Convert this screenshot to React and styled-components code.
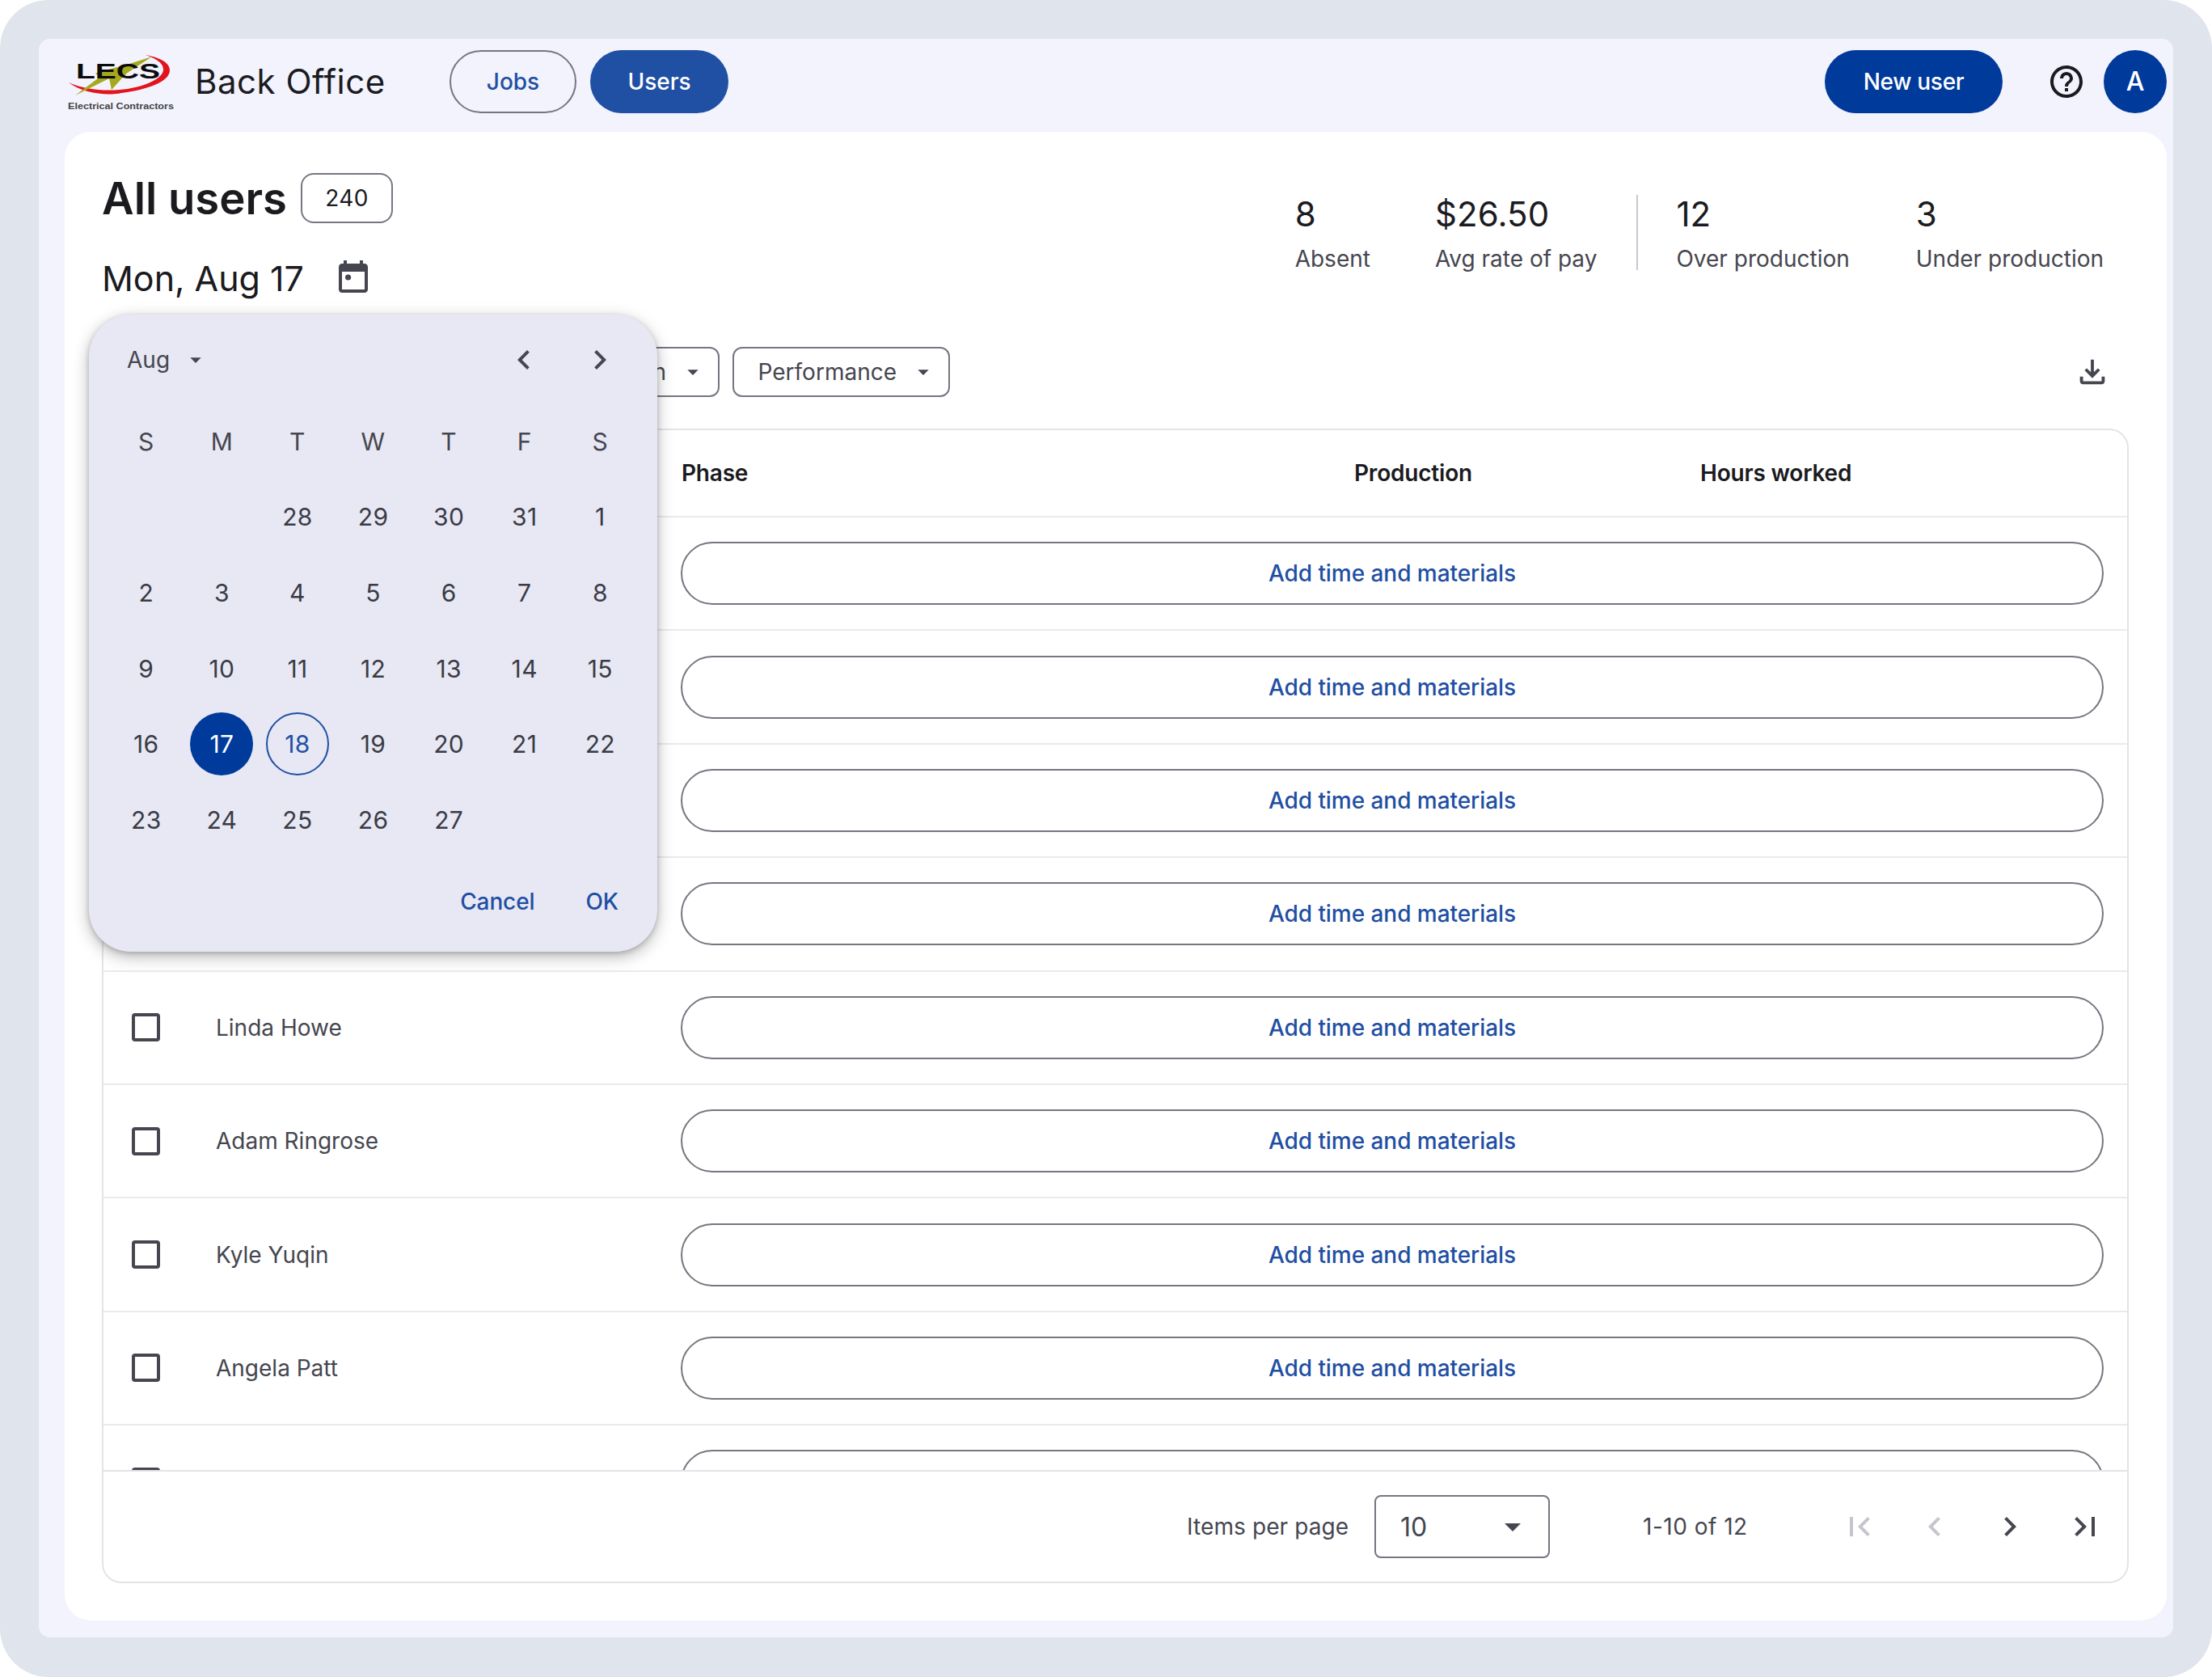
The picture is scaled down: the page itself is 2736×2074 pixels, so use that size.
import React from "react";
import styled, { createGlobalStyle } from "styled-components";

const Global = createGlobalStyle`
  html, body { margin: 0; padding: 0; background: #fff; }
  * { box-sizing: border-box; }
  body { font-family: Inter, "Liberation Sans", sans-serif; color: #1b1b1f; }
`;

const Frame = styled.div`
  width: 2736px; height: 2074px; background: #e0e4ec; border-radius: 60px;
  padding: 48px 48px 49px;
`;
const Shell = styled.div`
  height: 100%; background: #f2f3fd; border-radius: 14px;
  padding: 0 8px 21px 32px; display: flex; flex-direction: column;
`;
const Header = styled.header`
  height: 115px; flex: none; display: flex; align-items: center; padding-bottom: 10px;
`;
const LogoBox = styled.svg`
  width: 136px; height: 80px; flex: none; margin-left: 2px; margin-top: 4px;
`;
const AppName = styled.div`
  font-size: 42px; line-height: 1; margin-left: 23px; width: 315px; letter-spacing: 0.5px; color: #1b1b1f;
`;
const NavPill = styled.button`
  height: 78px; border-radius: 39px; font: 500 28px Inter, sans-serif;
  padding: 0; width: ${p => p.$w}px; margin-right: ${p => p.$mr || 0}px;
  border: ${p => (p.$active ? "0" : "2px solid #757780")};
  background: ${p => (p.$active ? "#2050a3" : "transparent")};
  color: ${p => (p.$active ? "#fff" : "#1f4fa3")};
`;
const Spacer = styled.div` flex: 1; `;
const NewUser = styled.button`
  width: 220px; height: 78px; border-radius: 39px; border: 0; background: #003a9b; color: #fff;
  font: 500 28px Inter, sans-serif; letter-spacing: -0.3px; margin-right: 55px;
`;
const HelpIcon = styled.svg` width: 48px; height: 48px; fill: #1b1b1f; margin-right: 22px; `;
const Avatar = styled.div`
  width: 78px; height: 78px; border-radius: 50%; background: #003a9b; color: #fff;
  display: flex; align-items: center; justify-content: center; font: 500 32px Inter, sans-serif;
`;
const Card = styled.main`
  position: relative; flex: 1; background: #fff; border-radius: 32px;
  padding: 51px 47px 46px 46px; display: flex; flex-direction: column; min-height: 0;
`;
const TopBlock = styled.div` display: flex; justify-content: space-between; height: 215px; flex: none; `;
const TitleColumn = styled.div` display: flex; flex-direction: column; `;
const TitleRow = styled.div` display: flex; align-items: center; gap: 17px; height: 62px; `;
const Title = styled.h1` font: 600 54.5px/1 Inter, sans-serif; margin: 0; `;
const CountChip = styled.div`
  width: 114px; height: 62px; border: 2px solid #757780; border-radius: 16px; font-size: 28px;
  display: flex; align-items: center; justify-content: center; letter-spacing: 0.4px;
`;
const DateRow = styled.div` display: flex; align-items: center; margin-top: 38px; height: 60px; gap: 37px; `;
const DateText = styled.div` font-size: 43px; line-height: 1; `;
const CalIcon = styled.svg` width: 48px; height: 48px; fill: #45464f; `;
const Stats = styled.div` display: flex; align-items: flex-start; padding: 27px 31px 0 0; `;
const Stat = styled.div` margin-left: ${p => p.$ml || 0}px; display: flex; flex-direction: column; `;
const StatValue = styled.div` font-size: 42px; line-height: 48px; height: 48px; color: #1b1b1f; letter-spacing: 0.1px; `;
const StatLabel = styled.div` font-size: 28px; line-height: 36px; margin-top: 13px; color: #45464f; `;
const StatDivider = styled.div` width: 2px; height: 93px; background: #c6c7d2; margin: 0 47px 0 49px; `;

const FilterRow = styled.div` display: flex; align-items: center; height: 62px; flex: none; gap: 16px; `;
const HiddenFilters = styled.div` width: 764px; display: flex; justify-content: flex-end; `;
const Filter = styled.button`
  height: 62px; width: ${p => p.$w}px; border: 2px solid #757780; border-radius: 12px; background: #fff;
  font: 400 28px Inter, sans-serif; color: #45464f; display: flex; align-items: center; justify-content: flex-end;
  padding: 0 15px 0 0; gap: 17px;
`;
const Caret = styled.svg` width: ${p => p.$s}px; height: ${p => p.$s}px; fill: #45464f; flex: none; `;
const DownloadIcon = styled.svg` width: 46px; height: 46px; fill: #45464f; margin-left: auto; margin-right: 22px; `;

const TableBox = styled.section`
  flex: 1; min-height: 0; margin-top: 39px; border: 2px solid #e4e4e8; border-radius: 24px;
  display: flex; flex-direction: column; overflow: hidden;
`;
const HeadRow = styled.div`
  flex: none; height: 108px; display: flex; align-items: center; font-weight: 600; font-size: 28px;
  border-bottom: 2px solid #eaeaee; color: #1b1b1f; padding-left: 715px; letter-spacing: -0.2px;
`;
const HeadCell = styled.div` width: ${p => p.$w}px; flex: none; `;
const Rows = styled.div` flex: 1; min-height: 0; overflow: hidden; `;
const Row = styled.div`
  height: 140.4px; display: flex; align-items: center; border-bottom: 2px solid #eaeaee; padding-right: 29px;
`;
const CheckBox = styled.span`
  width: 35px; height: 35px; border: 4px solid #45464f; border-radius: 4px; margin-left: 35px; flex: none;
`;
const Name = styled.div`
  width: 575px; margin-left: 69px; font-size: 28px; color: #45464f; flex: none;
`;
const AddButton = styled.button`
  flex: 1; height: 78px; border-radius: 39px; border: 2px solid #757780; background: #fff;
  color: #1f4fa3; font: 500 28px Inter, sans-serif; letter-spacing: -0.05px;
`;
const Footer = styled.footer`
  flex: none; height: 138px; border-top: 2px solid #e4e4e8; display: flex; align-items: center; padding-left: 1340px;
  font-size: 28px; color: #45464f; letter-spacing: 0.1px;
`;
const PerPage = styled.div` width: 232px; flex: none; `;
const SizeSelect = styled.div`
  width: 217px; height: 78px; flex: none; border: 2px solid #757780; border-radius: 8px; display: flex; align-items: center;
  justify-content: space-between; padding: 0 20px 0 30px; font-size: 32px; color: #45464f;
`;
const RangeText = styled.div` width: 244px; margin-left: 115px; flex: none; letter-spacing: 0.5px; `;
const PagerIcons = styled.div` display: flex; gap: 45px; `;
const PagerIcon = styled.svg` width: 48px; height: 48px; fill: ${p => (p.$off ? "#c4c5cd" : "#45464f")}; `;

const Popover = styled.div`
  position: absolute; left: 30px; top: 226px; width: 703px; height: 788px; border-radius: 52px; background: #e7e8f4;
  box-shadow: 0 6px 20px rgba(0,0,0,.28), 0 2px 6px rgba(0,0,0,.18); padding: 0 24px; display: flex; flex-direction: column;
`;
const PopHead = styled.div` height: 111px; flex: none; display: flex; align-items: center; padding-left: 23px; `;
const Month = styled.div` font-size: 28px; color: #45464f; margin-right: 16px; `;
const MonthNav = styled.div` margin-left: auto; display: flex; gap: 46px; margin-right: 23px; `;
const NavIcon = styled.svg` width: 48px; height: 48px; fill: #45464f; `;
const DayGrid = styled.div` display: grid; grid-template-columns: repeat(7, 93.6px); grid-auto-rows: 93.6px; margin-top: -1px; `;
const Day = styled.div`
  display: flex; align-items: center; justify-content: center; font-size: 30px; color: ${p => (p.$head ? "#45464f" : "#3a3b44")};
  letter-spacing: 0.4px; position: relative;
`;
const Mark = styled.span`
  width: 78px; height: 78px; border-radius: 50%; display: flex; align-items: center; justify-content: center;
  background: ${p => (p.$today ? "#003a9b" : "transparent")};
  color: ${p => (p.$today ? "#fff" : "#1f4fa3")};
  border: ${p => (p.$today ? "0" : "2px solid #1f4fa3")};
`;
const PopActions = styled.div`
  margin-top: 37px; display: flex; justify-content: flex-end; gap: 63px; padding-right: 24px;
  font-size: 28px; font-weight: 500; color: #1f4fa3; letter-spacing: -0.1px;
`;

const ICONS = {
  first: "M18.41 16.59L13.82 12l4.59-4.59L17 6l-6 6 6 6zM6 6h2v12H6z",
  prev: "M15.41 7.41L14 6l-6 6 6 6 1.41-1.41L10.83 12z",
  next: "M10 6L8.59 7.41 13.17 12l-4.58 4.59L10 18l6-6z",
  last: "M5.59 7.41L10.18 12l-4.59 4.59L7 18l6-6-6-6zM16 6h2v12h-2z",
  drop: "M7 10l5 5 5-5z",
  download: "M18 15v3H6v-3H4v3c0 1.1.9 2 2 2h12c1.1 0 2-.9 2-2v-3h-2zm-1-4l-1.41-1.41L13 12.17V4h-2v8.17L8.41 9.59 7 11l5 5 5-5z",
  help: "M11 18h2v-2h-2v2zm1-16C6.48 2 2 6.48 2 12s4.48 10 10 10 10-4.48 10-10S17.52 2 12 2zm0 18c-4.41 0-8-3.59-8-8s3.59-8 8-8 8 3.59 8 8-3.59 8-8 8zm0-14c-2.21 0-4 1.79-4 4h2c0-1.1.9-2 2-2s2 .9 2 2c0 2-3 1.75-3 5h2c0-2.25 3-2.5 3-5 0-2.21-1.79-4-4-4z",
  event: "M19 3h-1V1h-2v2H8V1H6v2H5c-1.11 0-1.99.9-1.99 2L3 19c0 1.1.89 2 2 2h14c1.1 0 2-.9 2-2V5c0-1.1-.9-2-2-2zm0 16H5V8h14v11zM7 11.5a1.8 1.8 0 1 0 3.6 0a1.8 1.8 0 1 0-3.6 0z",
};
const P = ({ n }) => <path d={ICONS[n]} />;

const Logo = () => (
  <LogoBox viewBox="0 0 136 80">
    <path d="M3 39 C20 52 50 56 68 52 C100 48 128 38 128 24 C128 14 115 8 98 5 C110 9 121 15 120 24 C118 36 92 46 66 48 C45 50 20 47 3 39Z" fill="#e2141c" />
    <polygon points="106,7 75,27.5 70,32.5 56,48 53,34 11,55 41,32.5 36,27.5 78,16" fill="#a6a91e" />
    <text x="12" y="33.5" fontFamily="'Liberation Sans', sans-serif" fontWeight="700" fontSize="26" textLength="104" lengthAdjust="spacingAndGlyphs" fill="#0b0b0b">LECS</text>
    <text x="2" y="72" fontFamily="'Liberation Sans', sans-serif" fontWeight="700" fontSize="11" textLength="131" lengthAdjust="spacingAndGlyphs" fill="#444">Electrical Contractors</text>
  </LogoBox>
);

const weeks = [
  ["", "", "28", "29", "30", "31", "1"],
  ["2", "3", "4", "5", "6", "7", "8"],
  ["9", "10", "11", "12", "13", "14", "15"],
  ["16", "17", "18", "19", "20", "21", "22"],
  ["23", "24", "25", "26", "27", "", ""],
];
const rowNames = ["", "", "", "", "Linda Howe", "Adam Ringrose", "Kyle Yuqin", "Angela Patt"];

export default function App() {
  return (
    <>
      <Global />
      <Frame>
        <Shell>
          <Header>
            <Logo />
            <AppName>Back Office</AppName>
            <NavPill $w={157} $mr={17}>Jobs</NavPill>
            <NavPill $w={171} $active>Users</NavPill>
            <Spacer />
            <NewUser>New user</NewUser>
            <HelpIcon viewBox="0 0 24 24"><P n="help" /></HelpIcon>
            <Avatar>A</Avatar>
          </Header>
          <Card>
            <TopBlock>
              <TitleColumn>
                <TitleRow>
                  <Title>All users</Title>
                  <CountChip>240</CountChip>
                </TitleRow>
                <DateRow>
                  <DateText>Mon, Aug 17</DateText>
                  <CalIcon viewBox="0 0 24 24"><P n="event" /></CalIcon>
                </DateRow>
              </TitleColumn>
              <Stats>
                <Stat><StatValue>8</StatValue><StatLabel>Absent</StatLabel></Stat>
                <Stat $ml={80}><StatValue>$26.50</StatValue><StatLabel>Avg rate of pay</StatLabel></Stat>
                <StatDivider />
                <Stat><StatValue>12</StatValue><StatLabel>Over production</StatLabel></Stat>
                <Stat $ml={82}><StatValue>3</StatValue><StatLabel>Under production</StatLabel></Stat>
              </Stats>
            </TopBlock>
            <FilterRow>
              <HiddenFilters>
                <Filter $w={240}>Position<Caret $s={32} viewBox="0 0 24 24"><P n="drop" /></Caret></Filter>
              </HiddenFilters>
              <Filter $w={269}>Performance<Caret $s={32} viewBox="0 0 24 24"><P n="drop" /></Caret></Filter>
              <DownloadIcon viewBox="0 0 24 24"><P n="download" /></DownloadIcon>
            </FilterRow>
            <TableBox>
              <HeadRow>
                <HeadCell $w={832}>Phase</HeadCell>
                <HeadCell $w={428}>Production</HeadCell>
                <HeadCell $w={300}>Hours worked</HeadCell>
              </HeadRow>
              <Rows>
                {rowNames.map((n, i) => (
                  <Row key={i}>
                    <CheckBox />
                    <Name>{n}</Name>
                    <AddButton>Add time and materials</AddButton>
                  </Row>
                ))}
                <Row>
                  <CheckBox />
                  <Name />
                  <AddButton />
                </Row>
              </Rows>
              <Footer>
                <PerPage>Items per page</PerPage>
                <SizeSelect>10<Caret $s={48} viewBox="0 0 24 24"><P n="drop" /></Caret></SizeSelect>
                <RangeText>1-10 of 12</RangeText>
                <PagerIcons>
                  <PagerIcon $off viewBox="0 0 24 24"><P n="first" /></PagerIcon>
                  <PagerIcon $off viewBox="0 0 24 24"><P n="prev" /></PagerIcon>
                  <PagerIcon viewBox="0 0 24 24"><P n="next" /></PagerIcon>
                  <PagerIcon viewBox="0 0 24 24"><P n="last" /></PagerIcon>
                </PagerIcons>
              </Footer>
            </TableBox>
            <Popover>
              <PopHead>
                <Month>Aug</Month>
                <Caret $s={32} viewBox="0 0 24 24"><P n="drop" /></Caret>
                <MonthNav>
                  <NavIcon viewBox="0 0 24 24"><P n="prev" /></NavIcon>
                  <NavIcon viewBox="0 0 24 24"><P n="next" /></NavIcon>
                </MonthNav>
              </PopHead>
              <DayGrid>
                {["S", "M", "T", "W", "T", "F", "S"].map((d, i) => <Day key={i} $head>{d}</Day>)}
                {weeks.flat().map((d, i) => (
                  <Day key={i}>
                    {d === "17" ? <Mark $today>{d}</Mark> : d === "18" ? <Mark>{d}</Mark> : d}
                  </Day>
                ))}
              </DayGrid>
              <PopActions><span>Cancel</span><span>OK</span></PopActions>
            </Popover>
          </Card>
        </Shell>
      </Frame>
    </>
  );
}
